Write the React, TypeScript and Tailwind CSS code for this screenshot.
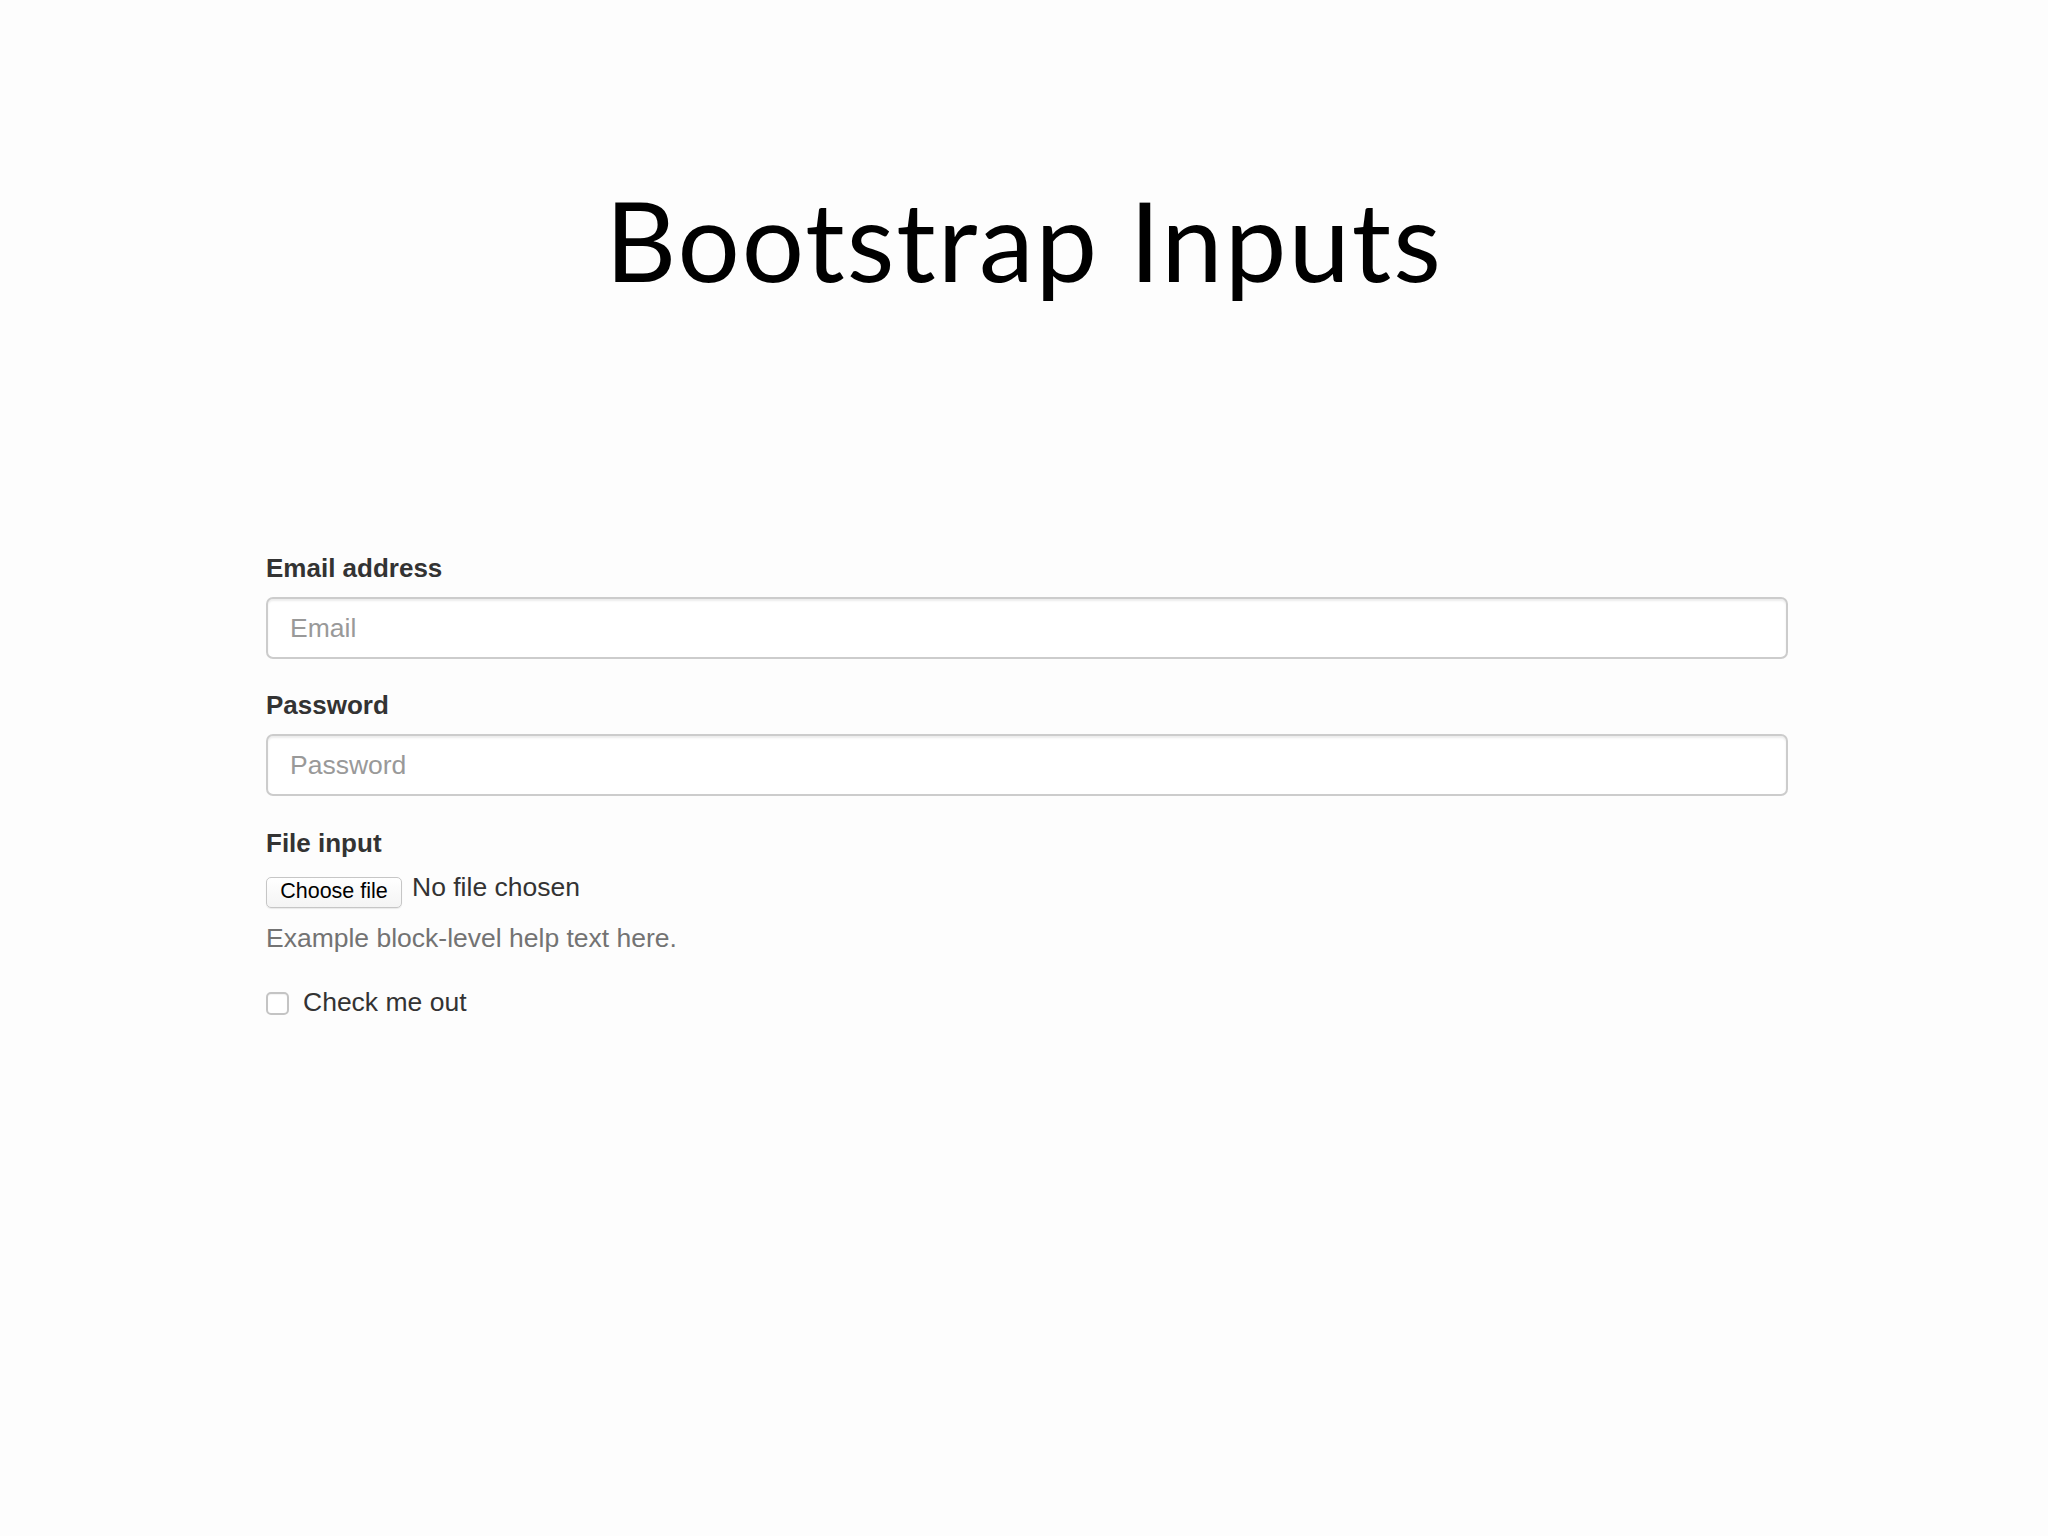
import React from 'react';

const sans = { fontFamily: '"Liberation Sans", Arial, sans-serif' };

const Field: React.FC<{ label: string; type: string; placeholder: string }> = ({ label, type, placeholder }) => (
  <div className="mb-[30px]">
    <label className="block h-[36px] leading-[32px] mb-[9px] text-[26px] font-bold text-[#333333]">{label}</label>
    <input
      type={type}
      placeholder={placeholder}
      className="block w-full h-[62px] px-[22px] text-[26.5px] text-[#555555] bg-white border-2 border-[#cccccc] rounded-[7px] shadow-[inset_0_2px_2px_rgba(0,0,0,0.075)] outline-none placeholder:text-[#999999]"
      style={sans}
    />
  </div>
);

const App: React.FC = () => {
  return (
    <div className="min-h-screen bg-[#fdfdfd] pt-[184px]" style={sans}>
      {/* Page heading */}
      <h1
        className="text-center text-[110px] leading-none font-normal tracking-[2px] text-black"
        style={{ fontFamily: 'Lato, "Open Sans", sans-serif' }}
      >
        Bootstrap Inputs
      </h1>

      <form className="w-[1522px] ml-[266px] mt-[258px]">
        <Field label="Email address" type="email" placeholder="Email" />
        <Field label="Password" type="password" placeholder="Password" />

        {/* File picker */}
        <div>
          <label className="block h-[36px] leading-[34px] mb-[9px] text-[26px] font-bold text-[#333333]">File input</label>
          <div className="flex items-center h-[40px]">
            <button
              type="button"
              className="h-[31px] w-[136px] mt-[2px] bg-gradient-to-b from-white to-[#f4f4f4] border border-[#c6c6c6] rounded-[5px] text-[21.5px] leading-none text-black shadow-[0_1px_1px_rgba(0,0,0,0.08)]"
              style={sans}
            >
              Choose file
            </button>
            <span className="ml-[10px] text-[26.5px] text-[#333333] -mt-[6px]">No file chosen</span>
          </div>
          <p className="mt-[9px] h-[36px] leading-[36px] text-[26.5px] text-[#737373]">Example block-level help text here.</p>
        </div>

        {/* Checkbox */}
        <label className="mt-[29px] flex items-center h-[36px] text-[26.5px] text-[#333333] font-normal">
          <span className="w-[23px] h-[23px] rounded-[5px] border-2 border-[#c4c4c4] bg-white shadow-[inset_0_1px_1px_rgba(0,0,0,0.05)]" />
          <span className="ml-[14px]">Check me out</span>
        </label>
      </form>
    </div>
  );
};

export default App;
